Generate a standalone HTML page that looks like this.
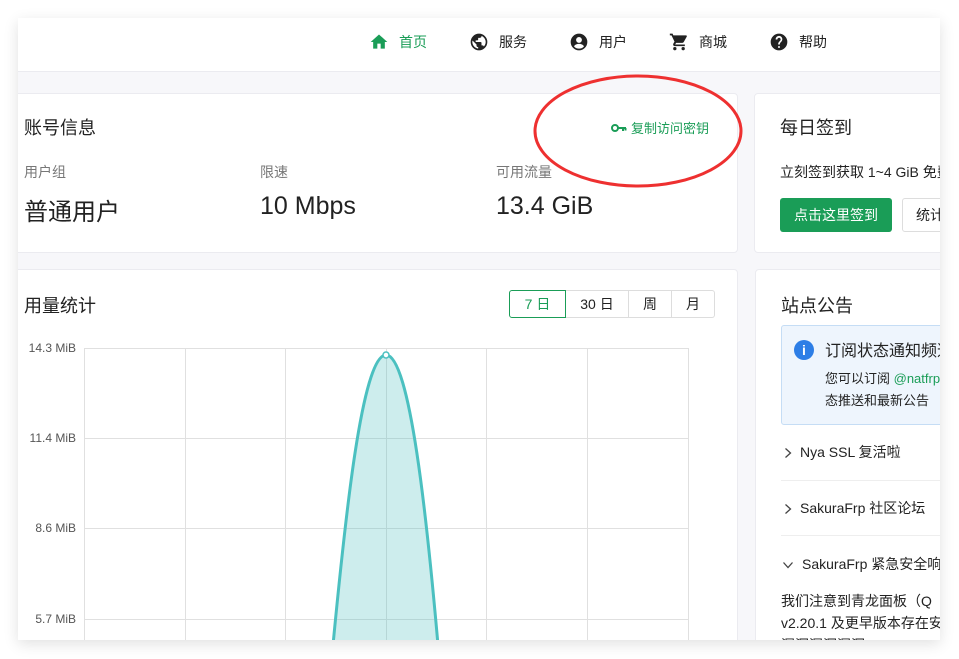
<!DOCTYPE html>
<html><head><meta charset="utf-8"><style>
*{box-sizing:border-box;margin:0;padding:0}
body{width:959px;height:659px;background:#fff;font-family:"Liberation Sans","Noto Sans CJK SC",sans-serif;color:#222;position:relative;overflow:hidden}
#win{position:absolute;left:18px;top:18px;width:922px;height:622px;background:#f7f7fa;overflow:hidden;box-shadow:0 4px 14px rgba(0,0,0,.12)}
.hdr{position:absolute;left:0;top:0;width:922px;height:54px;background:#fff;border-bottom:1px solid #ebebf0}
.nav{position:absolute;top:14px;font-size:14px;display:flex;align-items:center;gap:10px}
.card{position:absolute;background:#fff;border:1px solid #ebebf0;border-radius:4px}
.t{position:absolute;font-size:18px}
.lbl{position:absolute;font-size:14px;color:#777}
.val{position:absolute;font-size:25px}
.chev{display:inline-block;vertical-align:middle;margin-right:8px}
</style></head><body>
<div id="win">
<div class="hdr">
 <div class="nav" style="left:351px;color:#1a9d57"><svg width="20" height="20" viewBox="0 0 24 24"><path fill="#1a9d57" d="M10 20v-6h4v6h5v-8h3L12 3 2 12h3v8z"/></svg>首页</div>
 <div class="nav" style="left:451px"><svg width="20" height="20" viewBox="0 0 24 24"><path fill="#222" d="M12 2a10 10 0 1 0 0 20 10 10 0 0 0 0-20zm-1 17.9A8 8 0 0 1 4.2 10.2L9 15v1a2 2 0 0 0 2 2zm6.9-2.5A2 2 0 0 0 16 16h-1v-3a1 1 0 0 0-1-1H8v-2h2a1 1 0 0 0 1-1V7h2a2 2 0 0 0 2-2v-.4a8 8 0 0 1 2.9 12.8z"/></svg>服务</div>
 <div class="nav" style="left:551px"><svg width="20" height="20" viewBox="0 0 24 24"><path fill="#222" d="M12 2a10 10 0 1 0 0 20 10 10 0 0 0 0-20zm0 4a3.5 3.5 0 1 1 0 7 3.5 3.5 0 0 1 0-7zm0 14a8 8 0 0 1-6-2.8c.7-1.9 3.6-3 6-3s5.3 1.1 6 3A8 8 0 0 1 12 20z"/></svg>用户</div>
 <div class="nav" style="left:651px"><svg width="20" height="20" viewBox="0 0 24 24"><path fill="#222" d="M7 18a2 2 0 1 0 0 4 2 2 0 0 0 0-4zM1 2v2h2l3.6 7.6-1.4 2.4A2 2 0 0 0 7 17h12v-2H7.4l1.1-2h7.5a2 2 0 0 0 1.7-1l3.6-6.5A1 1 0 0 0 20.4 4H5.2l-.9-2zm16 16a2 2 0 1 0 0 4 2 2 0 0 0 0-4z"/></svg>商城</div>
 <div class="nav" style="left:751px"><svg width="20" height="20" viewBox="0 0 24 24"><path fill="#222" d="M12 2a10 10 0 1 0 0 20 10 10 0 0 0 0-20zm1 17h-2v-2h2zm2.1-7.8-.9.9C13.5 12.9 13 13.5 13 15h-2v-.5c0-1.1.5-2.1 1.2-2.8l1.2-1.3A2 2 0 1 0 10 9H8a4 4 0 1 1 7.1 2.2z"/></svg>帮助</div>
</div>

<div class="card" style="left:-10px;top:75px;width:730px;height:160px">
 <div class="t" style="left:15px;top:20px">账号信息</div>
 <div style="position:absolute;left:602px;top:24px;font-size:13px;color:#1a9d57;display:flex;align-items:center;gap:4px"><svg width="16" height="10" viewBox="0 0 16 10"><circle cx="4" cy="5" r="3" fill="none" stroke="#1a9d57" stroke-width="2"/><path d="M7 5h8M12 5v3M14.5 5v2.5" stroke="#1a9d57" stroke-width="2" fill="none"/></svg>复制访问密钥</div>
 <div class="lbl" style="left:15px;top:68px">用户组</div>
 <div class="val" style="left:15px;top:98px;font-size:24px">普通用户</div>
 <div class="lbl" style="left:251px;top:68px">限速</div>
 <div class="val" style="left:251px;top:98px">10 Mbps</div>
 <div class="lbl" style="left:487px;top:68px">可用流量</div>
 <div class="val" style="left:487px;top:98px">13.4 GiB</div>
</div>

<div class="card" style="left:736px;top:75px;width:200px;height:160px">
 <div class="t" style="left:25px;top:20px">每日签到</div>
 <div style="position:absolute;left:25px;top:68px;font-size:14px;white-space:nowrap">立刻签到获取 1~4 GiB 免费流量</div>
 <div style="position:absolute;left:25px;top:104px;width:112px;height:34px;background:#1a9d57;color:#fff;border-radius:3px;font-size:14px;text-align:center;line-height:34px">点击这里签到</div>
 <div style="position:absolute;left:147px;top:104px;width:80px;height:34px;border:1px solid #ddd;border-radius:3px;font-size:14px;line-height:32px;padding-left:13px">统计</div>
</div>

<div class="card" style="left:-10px;top:251px;width:730px;height:400px">
 <div class="t" style="left:15px;top:22px">用量统计</div>
 <div style="position:absolute;left:500px;top:20px;display:flex;font-size:14px;height:28px;line-height:26px">
  <div style="width:57px;text-align:center;border:1px solid #1a9d57;color:#1a9d57;border-radius:3px 0 0 3px">7 日</div>
  <div style="width:63px;text-align:center;border:1px solid #ddd;border-left:0">30 日</div>
  <div style="width:43px;text-align:center;border:1px solid #ddd;border-left:0">周</div>
  <div style="width:43px;text-align:center;border:1px solid #ddd;border-left:0;border-radius:0 3px 3px 0">月</div>
 </div>
</div>
<svg style="position:absolute;left:0;top:0" width="922" height="622">
 <g transform="translate(-18,-18)" font-family="Liberation Sans,sans-serif" font-size="12" fill="#555">
  <g stroke="#e0e0e0" stroke-width="1">
   <line x1="84" y1="348.5" x2="688" y2="348.5"/><line x1="84" y1="438.5" x2="688" y2="438.5"/><line x1="84" y1="528.5" x2="688" y2="528.5"/><line x1="84" y1="619.5" x2="688" y2="619.5"/>
   <line x1="84.5" y1="348" x2="84.5" y2="640"/><line x1="185.5" y1="348" x2="185.5" y2="640"/><line x1="285.5" y1="348" x2="285.5" y2="640"/><line x1="386.5" y1="348" x2="386.5" y2="640"/><line x1="486.5" y1="348" x2="486.5" y2="640"/><line x1="587.5" y1="348" x2="587.5" y2="640"/><line x1="688.5" y1="348" x2="688.5" y2="640"/>
  </g>
  <text x="76" y="352" text-anchor="end">14.3 MiB</text><text x="76" y="442" text-anchor="end">11.4 MiB</text><text x="76" y="532" text-anchor="end">8.6 MiB</text><text x="76" y="623" text-anchor="end">5.7 MiB</text>
  <path d="M333,645 C345,520 362,355 386,355 C410,355 427,520 438,645Z" fill="rgba(75,192,192,.28)" stroke="none"/>
  <path d="M333,645 C345,520 362,355 386,355 C410,355 427,520 438,645" fill="none" stroke="#4bc0c0" stroke-width="3"/>
  <circle cx="386" cy="355" r="3" fill="#fff" stroke="#4bc0c0" stroke-width="1.5"/>
  <ellipse cx="638" cy="131" rx="103" ry="55" fill="none" stroke="#ee3030" stroke-width="3"/>
 </g>
</svg>

<div class="card" style="left:737px;top:251px;width:200px;height:400px">
 <div class="t" style="left:25px;top:22px">站点公告</div>
 <div style="position:absolute;left:25px;top:55px;width:180px;height:100px;background:#eef5fd;border:1px solid #c5ddf5;border-radius:3px">
  <div style="position:absolute;left:12px;top:14px;width:20px;height:20px;border-radius:50%;background:#2d7ee6;color:#fff;font-weight:bold;font-size:14px;text-align:center;line-height:20px">i</div>
  <div style="position:absolute;left:43px;top:11px;font-size:16px;white-space:nowrap">订阅状态通知频道</div>
  <div style="position:absolute;left:43px;top:42px;font-size:13px;line-height:22px;white-space:nowrap">您可以订阅 <span style="color:#1a9d57">@natfrp</span><br>态推送和最新公告</div>
 </div>
 <div style="position:absolute;left:28px;top:172px;font-size:14px;white-space:nowrap"><svg class="chev" width="8" height="12" viewBox="0 0 8 12"><path d="M1.5 1.5l5 4.5-5 4.5" fill="none" stroke="#444" stroke-width="1.3"/></svg>Nya SSL 复活啦</div>
 <div style="position:absolute;left:25px;top:210px;width:180px;border-top:1px solid #eee"></div>
 <div style="position:absolute;left:28px;top:228px;font-size:14px;white-space:nowrap"><svg class="chev" width="8" height="12" viewBox="0 0 8 12"><path d="M1.5 1.5l5 4.5-5 4.5" fill="none" stroke="#444" stroke-width="1.3"/></svg>SakuraFrp 社区论坛</div>
 <div style="position:absolute;left:25px;top:265px;width:180px;border-top:1px solid #eee"></div>
 <div style="position:absolute;left:26px;top:284px;font-size:14px;white-space:nowrap"><svg class="chev" width="12" height="8" viewBox="0 0 12 8"><path d="M1.5 1.5l4.5 5 4.5-5" fill="none" stroke="#444" stroke-width="1.3"/></svg>SakuraFrp 紧急安全响应</div>
 <div style="position:absolute;left:25px;top:320px;font-size:14px;line-height:22px;white-space:nowrap">我们注意到青龙面板（Q<br>v2.20.1 及更早版本存在安全<br>漏洞漏洞漏洞</div>
</div>
</div>
</body></html>
